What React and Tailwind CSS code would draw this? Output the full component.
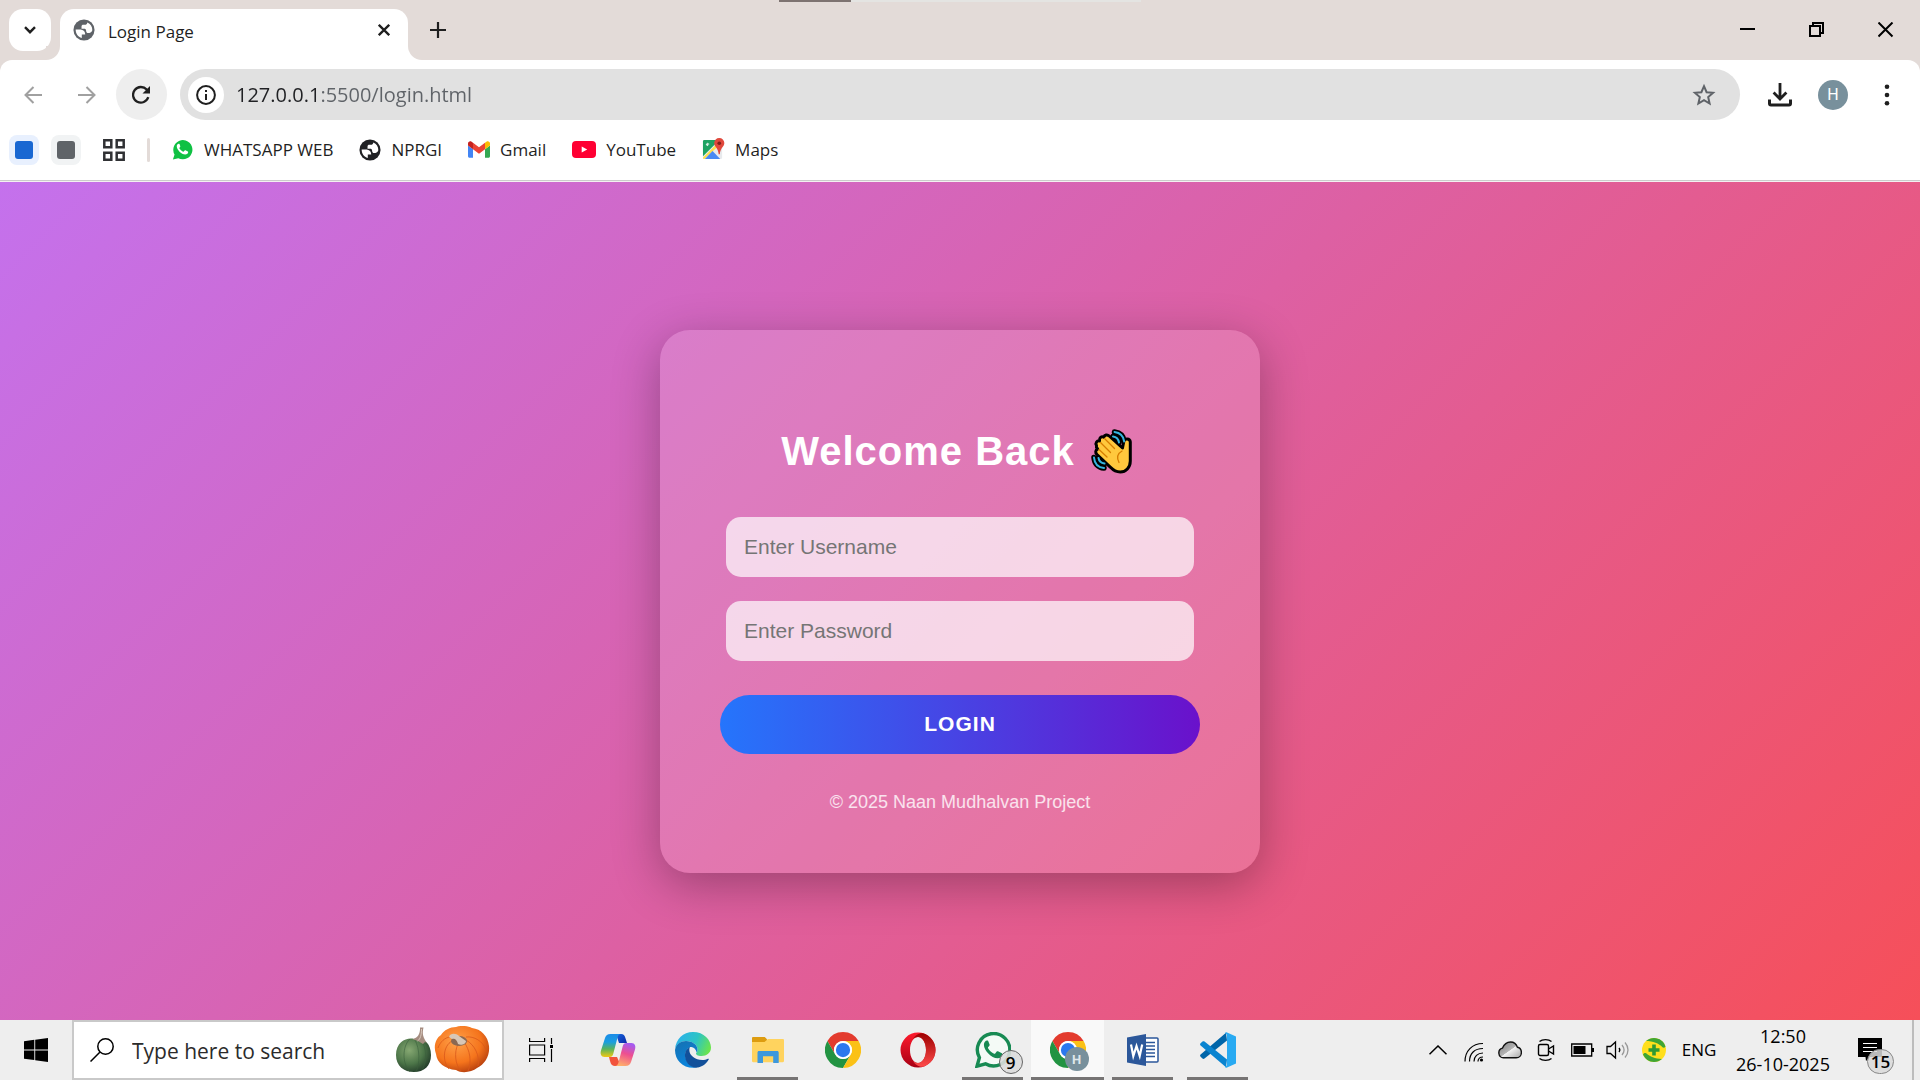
import React from "react";

const UI = "font-['Open_Sans','Noto_Sans',sans-serif]";

/* ---------- small drawings ---------- */

function Globe({ className }) {
  return (
    <svg viewBox="0 0 24 24" className={className} aria-hidden="true">
      <circle cx="12" cy="12" r="11.5" fill="currentColor" />
      <path
        fill="#fff"
        d="M2.900 11.500h4.200c4.400.1 6.200 2.100 6.200 5.500H9.600v3.800C5.500 19.700 2.900 16.200 2.900 11.500z"
      />
      <path
        fill="#fff"
        d="M15.600 3.700c3.500 1.500 5.600 4.700 5.500 8.600-.9 2.600-2.800 3-4.500 3-1.500-.1-2.200-1.200-2.300-2.600-.1-1.300-.8-2-2.200-2H9.300V8.100c0-1.200.8-1.900 1.900-1.900h1.600c1.600 0 2.700-.9 2.800-2.500z"
      />
    </svg>
  );
}

function ChromeLogo({ className }) {
  return (
    <svg viewBox="0 0 48 48" className={className} aria-hidden="true">
      <path d="M24 0a24 24 0 0 1 20.800 12H24a12 12 0 0 0-10.400 18L3.200 12A24 24 0 0 1 24 0z" fill="#e33b2e" />
      <path d="M13.600 30A12 12 0 0 0 34.400 30L24 48A24 24 0 0 1 3.200 12z" fill="#229342" />
      <path d="M44.800 12A24 24 0 0 1 24 48l10.400-18A12 12 0 0 0 34.400 18 12 12 0 0 0 24 12z" fill="#fbc116" />
      <circle cx="24" cy="24" r="12" fill="#fff" />
      <circle cx="24" cy="24" r="9.500" fill="#2b78ee" />
    </svg>
  );
}

function WhatsappMini({ className }) {
  return (
    <svg viewBox="0 0 24 24" className={className} aria-hidden="true">
      <path d="M2 22.500l1.700-5.300A10 10 0 1 1 7.600 21z" fill="#0fc143" />
      <path
        fill="#fff"
        d="M9 6.600c-.3-.6-.6-.6-1-.6-1 .1-2 1.200-2 2.600 0 3.500 4.700 8.600 8.900 8.600 1.700 0 2.900-.9 3-2.300 0-.4 0-.7-.3-.9l-2.500-1.200c-.4-.2-.6-.1-.8.200l-1 1.200c-.2.200-.4.200-.7.100-1.500-.6-3-1.900-3.900-3.500-.2-.3-.1-.5.100-.7.500-.5 1.100-1.100.9-1.600z"
      />
    </svg>
  );
}

function GmailLogo({ className }) {
  return (
    <svg viewBox="52 42 88 66" className={className} aria-hidden="true">
      <path fill="#4285f4" d="M58 108h14V74L52 59v43c0 3.320 2.690 6 6 6" />
      <path fill="#34a853" d="M120 108h14c3.320 0 6-2.690 6-6V59l-20 15" />
      <path fill="#fbbc04" d="M120 48v26l20-15v-8c0-7.420-8.470-11.650-14.400-7.200" />
      <path fill="#ea4335" d="M72 74V48l24 18 24-18v26L96 92" />
      <path fill="#c5221f" d="M52 51v8l20 15V48l-5.600-4.200c-5.940-4.450-14.400-.22-14.400 7.200" />
    </svg>
  );
}

function YoutubeLogo({ className }) {
  return (
    <svg viewBox="0 0 24 17" className={className} aria-hidden="true">
      <rect width="24" height="17" rx="4" fill="#ff0033" />
      <path d="M9.700 5.500v6l5.500-3z" fill="#fff" />
    </svg>
  );
}

function MapsLogo({ className }) {
  return (
    <svg viewBox="0 0 24 24" className={className} aria-hidden="true">
      <rect x="1" y="2" width="20" height="20" rx="1.500" fill="#e8eaed" />
      <path d="M2.500 2H18L1 19V3.500A1.500 1.500 0 0 1 2.500 2z" fill="#1ea362" />
      <path d="M14 7.500L1 20.500c0 .9.600 1.500 1.500 1.500L16 9.500z" fill="#ffe047" />
      <path d="M11 13.500L3 22h16z" fill="#4a89f3" />
      <path d="M7.500 6.300H5.400v1h1c-.2.700-1.600.9-1.800-.4-.1-1.300 1.300-1.700 2-.9" stroke="#fff" strokeWidth=".9" fill="none" />
      <path d="M18 0a5.300 5.300 0 0 1 5.300 5.300c0 4.200-4.200 4.700-4.700 11.700h-1.200c-.5-7-4.700-7.500-4.700-11.700A5.300 5.300 0 0 1 18 0z" fill="#e0483c" />
      <circle cx="18" cy="5.500" r="1.900" fill="#7d1f19" />
    </svg>
  );
}

function WavingHand({ className }) {
  return (
    <svg viewBox="0 0 44 46" className={className} aria-hidden="true">
      <g fill="none" stroke="#000" strokeWidth="5.500" strokeLinecap="round">
        <path d="M23.500 4c5.500.700 9 4 9.700 9.500M22 8.500c3.500.500 5.500 3 6 6" />
        <path d="M3 29.500c.500 6 4 10 10 10.500M7.500 30c.500 3 2.500 5 6 5.500" />
      </g>
      <path
        d="M5.500 17.500c-1.500-2.500.5-5 3-4.600-.5-3 2-5 4.300-3.700.7-2.400 3.600-3 5.400-1.200L31.500 20l1.300-6.500c.5-3.500 6.200-3.500 6.500.4V33c0 6.500-4.500 11-10 11-4.500 0-7.300-2-9.800-4.700L6 26.500c-2-2-1.600-4.600.7-5.400C5.700 20 5 18.700 5.500 17.500z"
        fill="#ffc83d"
        stroke="#000"
        strokeWidth="3"
        strokeLinejoin="round"
      />
      <g fill="none" strokeLinecap="round">
        <path d="M23.500 4c5.500.700 9 4 9.700 9.500M22 8.500c3.500.500 5.500 3 6 6" stroke="#35b5e0" strokeWidth="2" />
        <path d="M3 29.500c.500 6 4 10 10 10.500M7.500 30c.500 3 2.500 5 6 5.500" stroke="#35b5e0" strokeWidth="2" />
        <path d="M13.500 10.500l10 10M9.500 14.500l10 10M8 21.500l8 7.500M31 23c-4.500 2.500-5.500 6.500-3 11.500" stroke="#d67d00" strokeWidth="1.300" />
      </g>
    </svg>
  );
}

function Pumpkins({ className }) {
  return (
    <svg viewBox="0 0 94 48" className={className} aria-hidden="true">
      <defs>
        <radialGradient id="gourd" cx=".38" cy=".35" r=".75">
          <stop offset="0" stopColor="#86a872" />
          <stop offset=".55" stopColor="#4c7548" />
          <stop offset="1" stopColor="#1d3325" />
        </radialGradient>
        <radialGradient id="pumpkin" cx=".4" cy=".35" r=".75">
          <stop offset="0" stopColor="#ffa24a" />
          <stop offset=".6" stopColor="#f5741c" />
          <stop offset="1" stopColor="#a8330b" />
        </radialGradient>
      </defs>
      <path d="M18 13C12 11 0 15 0 29c0 11 8 17 18 17s17-6 17-17c0-13-9-18-17-16z" fill="url(#gourd)" />
      <path d="M14 13C6 20 6 38 14 46M19 14c5 9 5 24 1 32M25 14c6 8 6 22 1 30" stroke="#3a5f3c" strokeWidth=".6" fill="none" />
      <path d="M16 13l6 2 5 3 2-2 2 1c-4-6-5-9-3.500-15.500L24 1.500C24.500 8 21 13 16 13z" fill="#a58c80" />
      <path d="M25.500 3c0 6-1 10-4 12" stroke="#d9c8bc" strokeWidth="1" fill="none" />
      <path d="M60 1c6-2 12-1 16 1 9 1 16 8 17 18 1 10-4 18-12 22-5 4-15 6-21 2-11-1-19-7-20-16-3-8 0-16 5-19 3-5 9-8 15-8z" fill="url(#pumpkin)" />
      <path d="M56 15c-9 5-10 20-3 28M62 18c-4 8-3 21 3 27M68 16c6 8 8 20 4 29M70 14c9 5 14 16 12 26M70 11c8-1 17 4 20 13M55 11c-6 0-11 5-13 11" stroke="#d9581a" strokeWidth=".8" fill="none" />
      <ellipse cx="63" cy="15" rx="8" ry="5" fill="#8a6852" />
      <path d="M53 11c1-4 7-4 10-1l7 5c0 3-5 5-8 3-1-4-3-6-6-5z" fill="#d8c7b6" />
    </svg>
  );
}

function CopilotLogo({ className }) {
  return (
    <svg viewBox="0 0 36 34" className={className} aria-hidden="true">
      <defs>
        <linearGradient id="cpA" x1="0" y1="0" x2="0" y2="1">
          <stop offset="0" stopColor="#1b8be8" />
          <stop offset=".35" stopColor="#1a9ee0" />
          <stop offset=".65" stopColor="#59b35c" />
          <stop offset="1" stopColor="#f2c811" />
        </linearGradient>
        <linearGradient id="cpB" x1=".6" y1="0" x2=".3" y2="1">
          <stop offset="0" stopColor="#a55bf0" />
          <stop offset=".45" stopColor="#ee4f8f" />
          <stop offset="1" stopColor="#ffb16a" />
        </linearGradient>
        <linearGradient id="cpC" x1="0" y1="0" x2="1" y2="1">
          <stop offset="0" stopColor="#1764dc" />
          <stop offset="1" stopColor="#0a2aa8" />
        </linearGradient>
      </defs>
      <path d="M9 24h8l4 9h-6c-2.500 0-4-1.500-4.700-4z" fill="#f2533c" />
      <path d="M16 1h5c2.600 0 3.700 1.300 4.400 4L27 10h-8z" fill="url(#cpC)" />
      <path d="M10.500 1H21c-2 0-3 1.500-3.600 4l-4.200 16c-.6 2-1.500 3-3.500 3H4.500C1 24 0 21 1 17.500L5 5c.9-2.600 2.500-4 5.500-4z" fill="url(#cpA)" />
      <path d="M25.500 33H15c2 0 3-1.500 3.600-4l4.200-16c.6-2 1.500-3 3.500-3h5.200c3.500 0 4.500 3 3.500 6.500L31 29c-.9 2.600-2.500 4-5.500 4z" fill="url(#cpB)" />
    </svg>
  );
}

function EdgeLogo({ className }) {
  return (
    <svg viewBox="0 0 36 36" className={className} aria-hidden="true">
      <defs>
        <linearGradient id="edTop" x1="0" y1=".3" x2="1" y2=".6">
          <stop offset="0" stopColor="#2bb0ec" />
          <stop offset=".55" stopColor="#2cc4c5" />
          <stop offset="1" stopColor="#6be44c" />
        </linearGradient>
        <linearGradient id="edLeft" x1="0" y1="0" x2=".4" y2="1">
          <stop offset="0" stopColor="#1670b0" />
          <stop offset="1" stopColor="#0a84dc" />
        </linearGradient>
      </defs>
      <path d="M0 17C1 7 8 0 18 0c11 0 18 8 18 15.500 0 5.500-4.500 8.500-9.500 8.500-4 0-5.500-1.500-5.500-2.500 0-.7 1.500-1.500 1.500-4C22.500 12.500 17 9 11 9 6 9 2 12 0 17z" fill="url(#edTop)" />
      <path d="M0 18C1 12 6 9 11 9c6 0 11.500 3.500 11.500 8.500 0 1.400-.4 2.300-.8 3-1-4-4.200-6.500-7.200-5-4 2-5 7-3.500 11.500 1.500 5 6 8.600 11 8.500C9 37.500 0 29 0 18z" fill="url(#edLeft)" />
      <path d="M15 15c-4.500 2-6 7-4.500 12 1.500 5.500 7 9.500 12.500 8.500 5-1 9-4.500 10.700-8 .4-.8-.3-1-.8-.8-1.500.8-3.400 1.300-5.600 1.300-7 0-13-4.500-13-10 0-1.200.2-2.200.7-3z" fill="#12509a" />
    </svg>
  );
}

function FolderLogo({ className }) {
  return (
    <svg viewBox="0 0 32 26" className={className} aria-hidden="true">
      <path d="M0 1.200C0 .5.500 0 1.200 0H12c1 0 1.600.6 2.300 1.500l1 1.500H31v7H0z" fill="#dd9c10" />
      <path d="M0 5h12.500L16 2h14.800c.7 0 1.200.5 1.200 1.200V24c0 .7-.5 1.200-1.200 1.200H1.200C.5 25.200 0 24.700 0 24z" fill="#ffd35e" />
      <path d="M5.500 26V15.500c0-.9.600-1.500 1.500-1.500h18.200c.9 0 1.500.6 1.500 1.500V26h-5.500v-6.800H11V26z" fill="#3d98dd" />
    </svg>
  );
}

function OperaLogo({ className }) {
  return (
    <svg viewBox="0 0 36 36" className={className} aria-hidden="true">
      <defs>
        <linearGradient id="opA" x1="0" y1="0" x2="0" y2="1">
          <stop offset="0" stopColor="#ff1b2d" />
          <stop offset="1" stopColor="#a70014" />
        </linearGradient>
        <linearGradient id="opB" x1="0" y1="0" x2="0" y2="1">
          <stop offset="0" stopColor="#9c0000" />
          <stop offset="1" stopColor="#ff4b4b" />
        </linearGradient>
      </defs>
      <path fillRule="evenodd" d="M18 .5a17.500 17.500 0 0 0 0 35 17.500 17.500 0 0 0 0-35zM18 5c4.500 0 8 5.600 8 13s-3.500 13-8 13-8-5.600-8-13S13.500 5 18 5z" fill="url(#opA)" />
      <path d="M13 7c1.400-1.300 3.100-2 5-2 4.500 0 8 5.600 8 13s-3.500 13-8 13c-1.900 0-3.600-.7-5-2 2 3.500 6 6.300 10 5.700C30.500 32.500 35.500 26 35.500 18S30.500 3.500 23 1.300C19 .7 15 3.500 13 7z" fill="url(#opB)" />
    </svg>
  );
}

function WhatsappOutline({ className }) {
  return (
    <svg viewBox="0 0 36 36" className={className} aria-hidden="true">
      <path d="M2 34.200l2.400-8.600A16.200 16.200 0 1 1 10.500 31.800z" fill="#f4faf6" stroke="#178a53" strokeWidth="3.400" strokeLinejoin="miter" />
      <path
        d="M13.300 9.300c-.4-.7-.8-.7-1.300-.7-1.400 0-3.100 1.600-3.100 4.200 0 5.500 7.300 13.500 13.700 13.500 2.700 0 4.700-1.500 4.800-3.800 0-.6-.1-1-.5-1.300l-3.900-1.900c-.6-.3-.9-.1-1.300.3l-1.500 1.900c-.3.400-.6.400-1.100.2-2.400-1-4.700-3-6-5.500-.3-.5-.2-.8.100-1.100.8-.8 1.700-1.700 1.400-2.600z"
        fill="#178a53"
      />
    </svg>
  );
}

function WordLogo({ className }) {
  return (
    <svg viewBox="0 0 32 32" className={className} aria-hidden="true">
      <rect x="15" y="4" width="16" height="24" rx="1" fill="#fff" stroke="#2b579a" strokeWidth="1.500" />
      <path d="M18 8.500h10M18 12h10M18 15.500h10M18 19h10M18 22.500h10" stroke="#2b579a" strokeWidth="1.500" />
      <path d="M0 3.500L19 0v32L0 28.500z" fill="#2b579a" />
      <path d="M4 10.500l2.300 11.500L9.500 12l3.200 10L15.200 10.500" fill="none" stroke="#fff" strokeWidth="2.200" />
    </svg>
  );
}

function CodeLogo({ className }) {
  return (
    <svg viewBox="0 0 36 36" className={className} aria-hidden="true">
      <path d="M27 8.500L4.500 26.500c-.6.500-1.400.5-2 0L.6 24.700c-.7-.6-.7-1.700 0-2.300L26 .8z" fill="#0065a9" />
      <path d="M27 27.500L4.500 9.500c-.6-.5-1.400-.5-2 0L.6 11.300c-.7.600-.7 1.700 0 2.300L26 35.200z" fill="#0a84d0" />
      <path d="M26.500.3L36 4.500v27l-9.500 4.200c-.8.300-1.300-.2-1.300-.9l1.800-1.500V2.700l-1.800-1.500c0-.7.500-1.200 1.300-.9z" fill="#28aaf2" />
    </svg>
  );
}

/* ---------- browser window ---------- */

function TitleBar() {
  return (
    <header className="relative flex h-[60px] bg-[#e3dbd8] pl-[9px]">
      <div className="absolute left-[779px] top-0 flex h-[2px] w-[362px] bg-[#e4e4e2]" aria-hidden="true">
        <span className="h-full w-[72px] bg-[#7d7371]" />
      </div>
      <button aria-label="Search tabs" className="mt-[9px] flex size-[42px] items-center justify-center rounded-[14px] bg-white">
        <svg viewBox="0 0 12 8" className="h-2 w-3" fill="none" stroke="#1f1f1f" strokeWidth="2.400">
          <path d="M1 1.200l5 5 5-5" />
        </svg>
      </button>
      <div className="relative ml-[9px] mt-[9px] flex h-[51px] w-[348px] items-center rounded-t-[14px] bg-white pb-2.5 pl-[13px] pr-4">
        <span className="absolute -left-[14px] bottom-0 size-[14px] bg-white" aria-hidden="true">
          <span className="block size-full rounded-br-[14px] bg-[#e3dbd8]" />
        </span>
        <span className="absolute -right-[14px] bottom-0 size-[14px] bg-white" aria-hidden="true">
          <span className="block size-full rounded-bl-[14px] bg-[#e3dbd8]" />
        </span>
        <Globe className="size-[22px] text-[#5f6368]" />
        <span className="ml-[13px] flex-1 pt-1 text-[17px] leading-6 text-[#1f1f1f]">Login Page</span>
        <button aria-label="Close tab" className="flex size-4 items-center justify-center">
          <svg viewBox="0 0 12 12" className="size-3" stroke="#1f1f1f" strokeWidth="2.300">
            <path d="M.8.8l10.400 10.400M11.200.8L.8 11.200" />
          </svg>
        </button>
      </div>
      <button aria-label="New tab" className="ml-[22px] flex size-4 self-center items-center justify-center">
        <svg viewBox="0 0 16 16" className="size-4" stroke="#1f1f1f" strokeWidth="2.200">
          <path d="M8 0v16M0 8h16" />
        </svg>
      </button>
      <div className="ml-auto flex">
        <button aria-label="Minimize" className="flex w-[69px] items-center justify-center">
          <svg viewBox="0 0 16 16" className="size-4"><path d="M0 6h15v2H0z" fill="#000" /></svg>
        </button>
        <button aria-label="Restore" className="flex w-[69px] items-center justify-center">
          <svg viewBox="0 0 16 16" className="size-4" fill="none" stroke="#000" strokeWidth="2">
            <path d="M1 4h10v10H1zM4 4V1h10v10h-3" />
          </svg>
        </button>
        <button aria-label="Close window" className="flex w-[69px] items-center justify-center">
          <svg viewBox="0 0 16 16" className="size-4" stroke="#000" strokeWidth="2">
            <path d="M.5.500l14 14M14.500.500l-14 14" />
          </svg>
        </button>
      </div>
    </header>
  );
}

function Toolbar() {
  return (
    <div className="bg-[#e3dbd8]">
      <div className="flex h-[69px] items-center rounded-t-[12px] bg-white pl-6 pr-[23px]">
        <button aria-label="Back" className="flex size-[18px] items-center justify-center">
          <svg viewBox="0 0 18 18" className="size-[18px]" fill="none" stroke="#a0a0a0" strokeWidth="2">
            <path d="M9.500 1L1.500 9l8 8M1.500 9H18" />
          </svg>
        </button>
        <button aria-label="Forward" className="ml-9 flex size-[18px] items-center justify-center">
          <svg viewBox="0 0 18 18" className="size-[18px]" fill="none" stroke="#a0a0a0" strokeWidth="2">
            <path d="M8.500 1l8 8-8 8M16.500 9H0" />
          </svg>
        </button>
        <button aria-label="Reload" className="ml-5 flex size-[51px] items-center justify-center rounded-full bg-[#eeeeee]">
          <svg viewBox="0 0 20 20" className="size-5" fill="none" stroke="#1f1f1f" strokeWidth="2.300">
            <path d="M16.300 12.200A7.800 7.800 0 1 1 14.700 4.600L16.500 6.500" />
            <path d="M18 1v7.500h-7.500z" fill="#1f1f1f" stroke="none" />
          </svg>
        </button>
        <div className="ml-[13px] flex h-[51px] flex-1 items-center rounded-full bg-[#e1e1e1] pl-2 pr-6">
          <button aria-label="Site information" className="flex size-9 items-center justify-center rounded-full bg-white">
            <svg viewBox="0 0 20 20" className="size-5" fill="none" stroke="#1f1f1f" strokeWidth="2">
              <circle cx="10" cy="10" r="8.900" />
              <path d="M10 9v6M10 5v2" />
            </svg>
          </button>
          <input
            aria-label="Address"
            defaultValue="127.0.0.1:5500/login.html"
            className="ml-3 h-8 flex-1 bg-[linear-gradient(90deg,#202124_83px,#5f6368_83px)] bg-clip-text text-[20px] leading-8 text-transparent caret-black outline-none"
          />
          <button aria-label="Bookmark this page" className="flex size-6 items-center justify-center">
            <svg viewBox="0 0 24 24" className="size-6" fill="none" stroke="#5f6368" strokeWidth="2">
              <path d="M12 3.200l2.600 6 6.500.6-4.900 4.300 1.400 6.400L12 17.100l-5.600 3.400 1.400-6.400-4.900-4.300 6.500-.6z" />
            </svg>
          </button>
        </div>
        <button aria-label="Downloads" className="ml-7 flex size-6 items-center justify-center">
          <svg viewBox="0 0 24 24" className="size-6" fill="none" stroke="#1f1f1f" strokeWidth="3">
            <path d="M12 0v15.500M5.600 9.500L12 15.900l6.400-6.400" strokeWidth="2.800" />
            <path d="M1.500 16.500v4c0 1 .5 1.500 1.500 1.500h18c1 0 1.500-.5 1.500-1.500v-4" />
          </svg>
        </button>
        <button aria-label="Profile" className="ml-[26px] flex size-[30px] items-center justify-center rounded-full bg-[#78909c] font-['Roboto',sans-serif] text-[16px] leading-none text-white">
          H
        </button>
        <button aria-label="Menu" className="ml-[29px] flex size-5 items-center justify-center">
          <svg viewBox="0 0 6 22" className="h-[22px] w-[6px]" fill="#1f1f1f">
            <circle cx="3" cy="2.700" r="2.300" />
            <circle cx="3" cy="11" r="2.300" />
            <circle cx="3" cy="19.300" r="2.300" />
          </svg>
        </button>
      </div>
    </div>
  );
}

function Bookmark({ icon, label }) {
  return (
    <a href="#" className="flex items-center gap-[10px] whitespace-nowrap">
      {icon}
      <span>{label}</span>
    </a>
  );
}

function BookmarksBar() {
  return (
    <nav aria-label="Bookmarks" className="flex h-[52px] items-center border-b border-[#cbcbcb] bg-white pb-2.5 pl-[9px] text-[17px] leading-6 text-[#1f1f1f]">
      <button aria-label="Blue tab group" className="flex size-[30px] items-center justify-center rounded-[8px] bg-[#e8f0fe]">
        <span className="size-[18px] rounded-[3px] bg-[#1967d2]" />
      </button>
      <button aria-label="Grey tab group" className="ml-3 flex size-[30px] items-center justify-center rounded-[8px] bg-[#f1f3f4]">
        <span className="size-[18px] rounded-[3px] bg-[#5f6368]" />
      </button>
      <button aria-label="Apps" className="ml-[22px]">
        <svg viewBox="0 0 22 22" className="size-[22px]" fill="none" stroke="#303134" strokeWidth="2.500">
          <path d="M1.300 1.300h7v7h-7zM13.700 1.300h7v7h-7zM1.300 13.700h7v7h-7zM13.700 13.700h7v7h-7z" />
        </svg>
      </button>
      <span className="ml-[22px] h-6 w-[3px] rounded-full bg-[#e3dbd8]" />
      <div className="ml-[21px] flex items-center gap-[26px]">
        <Bookmark icon={<WhatsappMini className="size-[23px]" />} label="WHATSAPP WEB" />
        <Bookmark icon={<Globe className="size-[22px] text-[#202124]" />} label="NPRGI" />
        <Bookmark icon={<GmailLogo className="h-[17px] w-[22px]" />} label="Gmail" />
        <Bookmark icon={<YoutubeLogo className="h-[17px] w-6" />} label="YouTube" />
        <Bookmark icon={<MapsLogo className="size-[23px]" />} label="Maps" />
      </div>
    </nav>
  );
}

function LoginPage() {
  const field =
    "mx-1.5 h-[60px] rounded-[15px] bg-white/70 px-[18px] text-[21px] text-[#333] outline-none placeholder:text-[#757575]";
  return (
    <main className="flex flex-1 items-center justify-center border-t border-[#f4f0f2] bg-[linear-gradient(135deg,#c471ed,#f64f59)] font-['Liberation_Sans',Arial,sans-serif]">
      <form
        onSubmit={(e) => e.preventDefault()}
        className="flex w-[600px] max-w-full flex-col rounded-[30px] bg-white/15 px-[60px] pb-[57px] pt-24 shadow-[0_12px_48px_rgba(0,0,0,0.3)]"
      >
        <h1 className="mb-10 flex items-center justify-center gap-4 whitespace-nowrap pr-1 text-[40px] font-bold leading-[51px] tracking-wide text-white">
          Welcome Back
          <WavingHand className="h-[46px] w-11" />
        </h1>
        <input type="text" aria-label="Username" placeholder="Enter Username" className={field} />
        <input type="password" aria-label="Password" placeholder="Enter Password" className={"mt-6 " + field} />
        <button
          type="submit"
          className="mt-[34px] h-[59px] rounded-full bg-[linear-gradient(90deg,#2575fc,#6a11cb)] text-[21px] font-bold tracking-wider text-white"
        >
          LOGIN
        </button>
        <p className="mt-[34px] text-center text-[18px] leading-7 text-white/80">© 2025 Naan Mudhalvan Project</p>
      </form>
    </main>
  );
}

/* ---------- taskbar ---------- */

function Task({ label, running, active, children }) {
  return (
    <button aria-label={label} className="relative flex w-[75px] justify-center">
      <span className={"flex h-full w-[73px] items-center justify-center " + (active ? "bg-[#f9f9f9]" : "")}>
        {children}
      </span>
      {running && (
        <span
          className={"absolute bottom-0 h-[3px] bg-[#767474] " + (active ? "w-[73px]" : "w-[61px]")}
        />
      )}
    </button>
  );
}

function TrayIcon({ label, children }) {
  return (
    <button aria-label={label} className="flex w-9 items-center justify-center">
      {children}
    </button>
  );
}

function Taskbar() {
  return (
    <footer className="flex h-[60px] bg-[#eeeeee] text-black">
      <button aria-label="Start" className="flex w-[72px] items-center justify-center">
        <svg viewBox="0 0 24 24" className="size-6" fill="#000">
          <path d="M0 3.300l10.300-1.500v9.700H0zM11.200 1.700L24 0v11.500H11.200zM0 12.400h10.300v9.700L0 20.700zM11.200 12.400H24V24l-12.800-1.800z" />
        </svg>
      </button>
      <label className="flex w-[432px] items-center border-2 border-[#c9c9c9] bg-white pl-4 pr-3">
        <svg viewBox="0 0 24 24" className="size-6 shrink-0" fill="none" stroke="#000" strokeWidth="1.500">
          <circle cx="15.500" cy="8.500" r="7.700" />
          <path d="M9.800 14.200L.5 23.500" />
        </svg>
        <input
          aria-label="Search"
          placeholder="Type here to search"
          className="ml-[18px] h-8 w-0 flex-1 pt-0.5 text-[21px] text-black outline-none placeholder:text-[#2b2b2b]"
        />
        <Pumpkins className="h-12 w-[94px] shrink-0" />
      </label>
      <div className="flex pl-px">
        <Task label="Task view">
          <svg viewBox="0 0 28 24" className="h-6 w-7" fill="none" stroke="#000" strokeWidth="1.200">
            <path d="M.6 7h15v10H.6zM.6 0v3.500h15V0M.6 24v-3.500h15V24M22.500 0v6M22.500 11v13" />
            <path d="M21 7h3v3h-3z" fill="#000" stroke="none" />
          </svg>
        </Task>
        <Task label="Copilot"><CopilotLogo className="h-[34px] w-9" /></Task>
        <Task label="Edge"><EdgeLogo className="size-9" /></Task>
        <Task label="File Explorer" running><FolderLogo className="h-[26px] w-8" /></Task>
        <Task label="Chrome"><ChromeLogo className="size-9" /></Task>
        <Task label="Opera"><OperaLogo className="size-9" /></Task>
        <Task label="WhatsApp" running>
          <span className="relative">
            <WhatsappOutline className="size-9" />
            <span className="absolute -bottom-1.5 -right-3 flex size-6 items-center justify-center rounded-full border border-[#666] bg-[#dcdcdc]/90 text-[17px] font-semibold leading-none text-black">
              9
            </span>
          </span>
        </Task>
        <Task label="Chrome, profile H" running active>
          <span className="relative">
            <ChromeLogo className="size-9" />
            <span className="absolute -bottom-[3px] -right-[3px] flex size-6 items-center justify-center rounded-full bg-[#78909c] font-['Roboto',sans-serif] text-[13px] font-bold leading-none text-[#dfe7ea]">
              H
            </span>
          </span>
        </Task>
        <Task label="Word" running><WordLogo className="size-8" /></Task>
        <Task label="Visual Studio Code" running><CodeLogo className="size-9" /></Task>
      </div>
      <div className="ml-auto flex">
        <TrayIcon label="Show hidden icons">
          <svg viewBox="0 0 18 10" className="h-[10px] w-[18px]" fill="none" stroke="#000" strokeWidth="1.500">
            <path d="M.5 9.300L9 1l8.500 8.300" />
          </svg>
        </TrayIcon>
        <TrayIcon label="Network">
          <svg viewBox="0 0 20 20" className="mt-1 size-5" fill="none" stroke="#000" strokeWidth="1.200">
            <path d="M1 19.500C1 9 8 1.500 19 1.500M5.500 19.500c0-8 5-13 13.500-13M10 19.500c0-5 3.500-8.500 9-8.500M14 19.500c0-2.500 2-4.500 5-4.500" />
            <circle cx="17.500" cy="18" r="1.600" fill="#000" stroke="none" />
          </svg>
        </TrayIcon>
        <TrayIcon label="OneDrive">
          <svg viewBox="0 0 24 18" className="h-[18px] w-6">
            <defs>
              <linearGradient id="cloud" x1="0" y1="0" x2="1" y2="1">
                <stop offset="0" stopColor="#7b7b7b" />
                <stop offset=".5" stopColor="#b5b5b5" />
                <stop offset=".52" stopColor="#f2f2f2" />
                <stop offset="1" stopColor="#a5a5a5" />
              </linearGradient>
            </defs>
            <path d="M5.500 16.800a4.900 4.900 0 0 1-1.100-9.600C6 3.500 9 1 12.500 1c3 0 5.800 1.800 6.900 5.200 2.600.6 4 2.800 4 5.200 0 3-2.200 5.400-5.200 5.400z" fill="url(#cloud)" stroke="#111" strokeWidth="1.400" />
          </svg>
        </TrayIcon>
        <TrayIcon label="Meet now">
          <svg viewBox="0 0 18 24" className="h-6 w-[18px]" fill="none" stroke="#000" strokeWidth="1.400">
            <rect x="1.500" y="6.500" width="10" height="11" rx="1.500" />
            <path d="M11.500 11l5-3v8l-5-3M2.500 3.500C5.500 1 11.500 1 14.500 3.500M2.500 20.500c3 2.500 9 2.500 12 0" />
          </svg>
        </TrayIcon>
        <TrayIcon label="Battery">
          <svg viewBox="0 0 23 14" className="h-[14px] w-[23px]" fill="none" stroke="#000" strokeWidth="1.300">
            <path d="M.7 1h20v12H.7z" />
            <path d="M2.500 3h12v8h-12zM21 5h2v4h-2z" fill="#000" stroke="none" />
          </svg>
        </TrayIcon>
        <TrayIcon label="Volume">
          <svg viewBox="0 0 24 20" className="h-5 w-6" fill="none" stroke="#000" strokeWidth="1.300">
            <path d="M1 6.500h3.500L9.500 2v16l-5-4.500H1z" />
            <path d="M13 8c1 1.200 1 2.800 0 4" />
            <path d="M16 5c2.500 3 2.500 7 0 10M19 2.500c4 4.500 4 10.500 0 15" stroke="#999" />
          </svg>
        </TrayIcon>
        <TrayIcon label="Security">
          <svg viewBox="0 0 24 24" className="size-6">
            <circle cx="12" cy="12" r="12" fill="#ffdf1c" />
            <path d="M4 3C6.500 1 9 0 12 0c5.500 0 10 3.500 11.500 8.500-.8 1.300-2 1.500-3 .7C17 5.500 11 3 4 3z" fill="#3fa535" />
            <path d="M20 21c-2.500 2-5 3-8 3-5 0-9-3-11-7.500.7-1.500 2-2 3.200-1.200C8 18.500 13 21 20 21z" fill="#3fa535" />
            <path d="M10.200 6.500h3.600v3.700h3.700v3.600h-3.700v3.700h-3.600v-3.700H6.500v-3.600h3.700z" fill="#2f9a33" />
          </svg>
        </TrayIcon>
        <button className="flex w-[54px] items-center justify-center text-[17px]">ENG</button>
        <button className="flex w-[114px] flex-col items-center justify-center text-[18px] leading-7">
          <span>12:50</span>
          <span className="whitespace-nowrap">26-10-2025</span>
        </button>
        <button aria-label="Notifications, 15 new" className="flex w-[72px] items-center pl-[18px]">
          <span className="relative">
            <svg viewBox="0 0 24 24" className="size-6">
              <path d="M0 0h24v19H12l-4 4-.5-4H0z" fill="#000" />
              <path d="M5 5.500h14M5 9.500h14M5 13.500h14" stroke="#fff" strokeWidth="1.200" />
            </svg>
            <span className="absolute -bottom-3 -right-3 flex h-[25px] w-[27px] items-center justify-center rounded-full border border-[#888] bg-[#d9d9d9]/85 text-[17px] font-semibold leading-none">
              15
            </span>
          </span>
        </button>
        <button aria-label="Show desktop" className="w-2 border-l-2 border-[#bdbdbd]" />
      </div>
    </footer>
  );
}

export default function App() {
  return (
    <div className={"flex min-h-screen flex-col " + UI}>
      <TitleBar />
      <Toolbar />
      <BookmarksBar />
      <LoginPage />
      <Taskbar />
    </div>
  );
}
